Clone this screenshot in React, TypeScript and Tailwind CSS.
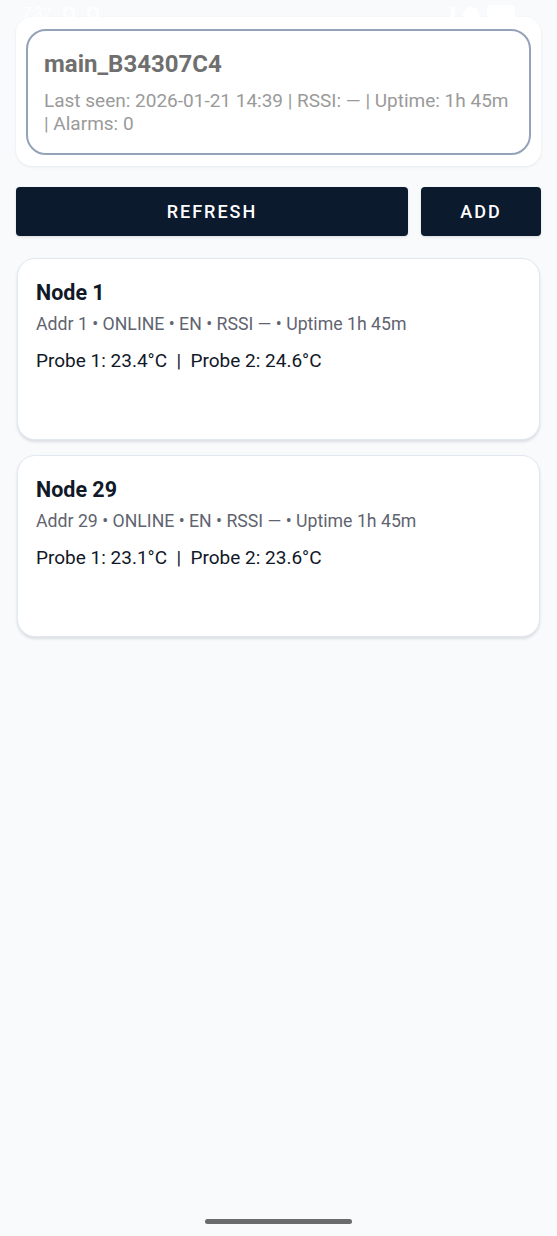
import React from 'react';

type Node = {
  name: string;
  addr: number;
  probe1: string;
  probe2: string;
};

const nodes: Node[] = [
  { name: 'Node 1', addr: 1, probe1: '23.4', probe2: '24.6' },
  { name: 'Node 29', addr: 29, probe1: '23.1', probe2: '23.6' },
];

const StatusBar: React.FC = () => (
  <div className="absolute top-0 left-0 right-0 h-[26px] flex items-center justify-between px-[22px] text-white text-[15px] z-10 pointer-events-none">
    <div className="flex items-center gap-3">
      <span>7:32</span>
      <span className="w-3 h-3 rounded-full border-2 border-white" />
      <span className="w-3 h-3 rounded-full border-2 border-white" />
    </div>
    <div className="flex items-center gap-2 mr-[20px]">
      <span className="w-1 h-3 bg-white" />
      <span className="w-4 h-3 rounded-t-full bg-white" />
      <span className="w-7 h-4 rounded bg-white" />
    </div>
  </div>
);

const NodeCard: React.FC<{ node: Node }> = ({ node }) => (
  <div className="mx-[1px] h-[182px] rounded-[18px] bg-white border border-slate-200 shadow-[0_2px_3px_rgba(15,23,42,0.12)] px-[18px] pt-[20px]">
    <div className="text-[21.5px] leading-[28px] font-bold text-[#111827]">{node.name}</div>
    <div className="mt-[6px] text-[17.7px] leading-[22px] text-[#5f6470]">
      Addr {node.addr} • ONLINE • EN • RSSI — • Uptime 1h 45m
    </div>
    <div className="mt-[14px] text-[19px] leading-[24px] text-[#111827]">
      Probe 1: {node.probe1}°C &nbsp;|&nbsp; Probe 2: {node.probe2}°C
    </div>
  </div>
);

const App: React.FC = () => {
  return (
    <div
      className="relative min-h-screen h-[1236px] bg-[#f8fafc] px-4 pt-[17px]"
      style={{ fontFamily: 'Roboto, "Noto Sans", sans-serif' }}
    >
      <StatusBar />

      <div className="rounded-[16px] bg-white shadow-[0_1px_3px_rgba(15,23,42,0.08)] px-[10px] pt-[12px] pb-[11px]">
        <div className="rounded-[20px] border-2 border-[#94a3b8] px-[16px] pt-[18px] pb-[18px]">
          <div className="text-[24px] leading-[30px] font-bold text-[#6f6f6f]">main_B34307C4</div>
          <div className="mt-[10px] text-[19px] leading-[23px] text-[#9a9a9a]">
            Last seen: 2026-01-21 14:39 | RSSI: — | Uptime: 1h 45m | Alarms: 0
          </div>
        </div>
      </div>

      <div className="mt-[21px] flex gap-[13px]">
        <button className="flex-1 h-[49px] rounded-[4px] bg-[#0c1a2e] text-white text-[18px] font-medium tracking-[2px] shadow-sm">
          REFRESH
        </button>
        <button className="w-[120px] h-[49px] rounded-[4px] bg-[#0c1a2e] text-white text-[18px] font-medium tracking-[2px] shadow-sm">
          ADD
        </button>
      </div>

      <div className="mt-[22px] flex flex-col gap-[15px]">
        {nodes.map((n) => (
          <NodeCard key={n.addr} node={n} />
        ))}
      </div>

      <div className="absolute left-[205px] top-[1219px] w-[147px] h-[5px] rounded-full bg-[#6b6b6b]" />
    </div>
  );
};

export default App;
